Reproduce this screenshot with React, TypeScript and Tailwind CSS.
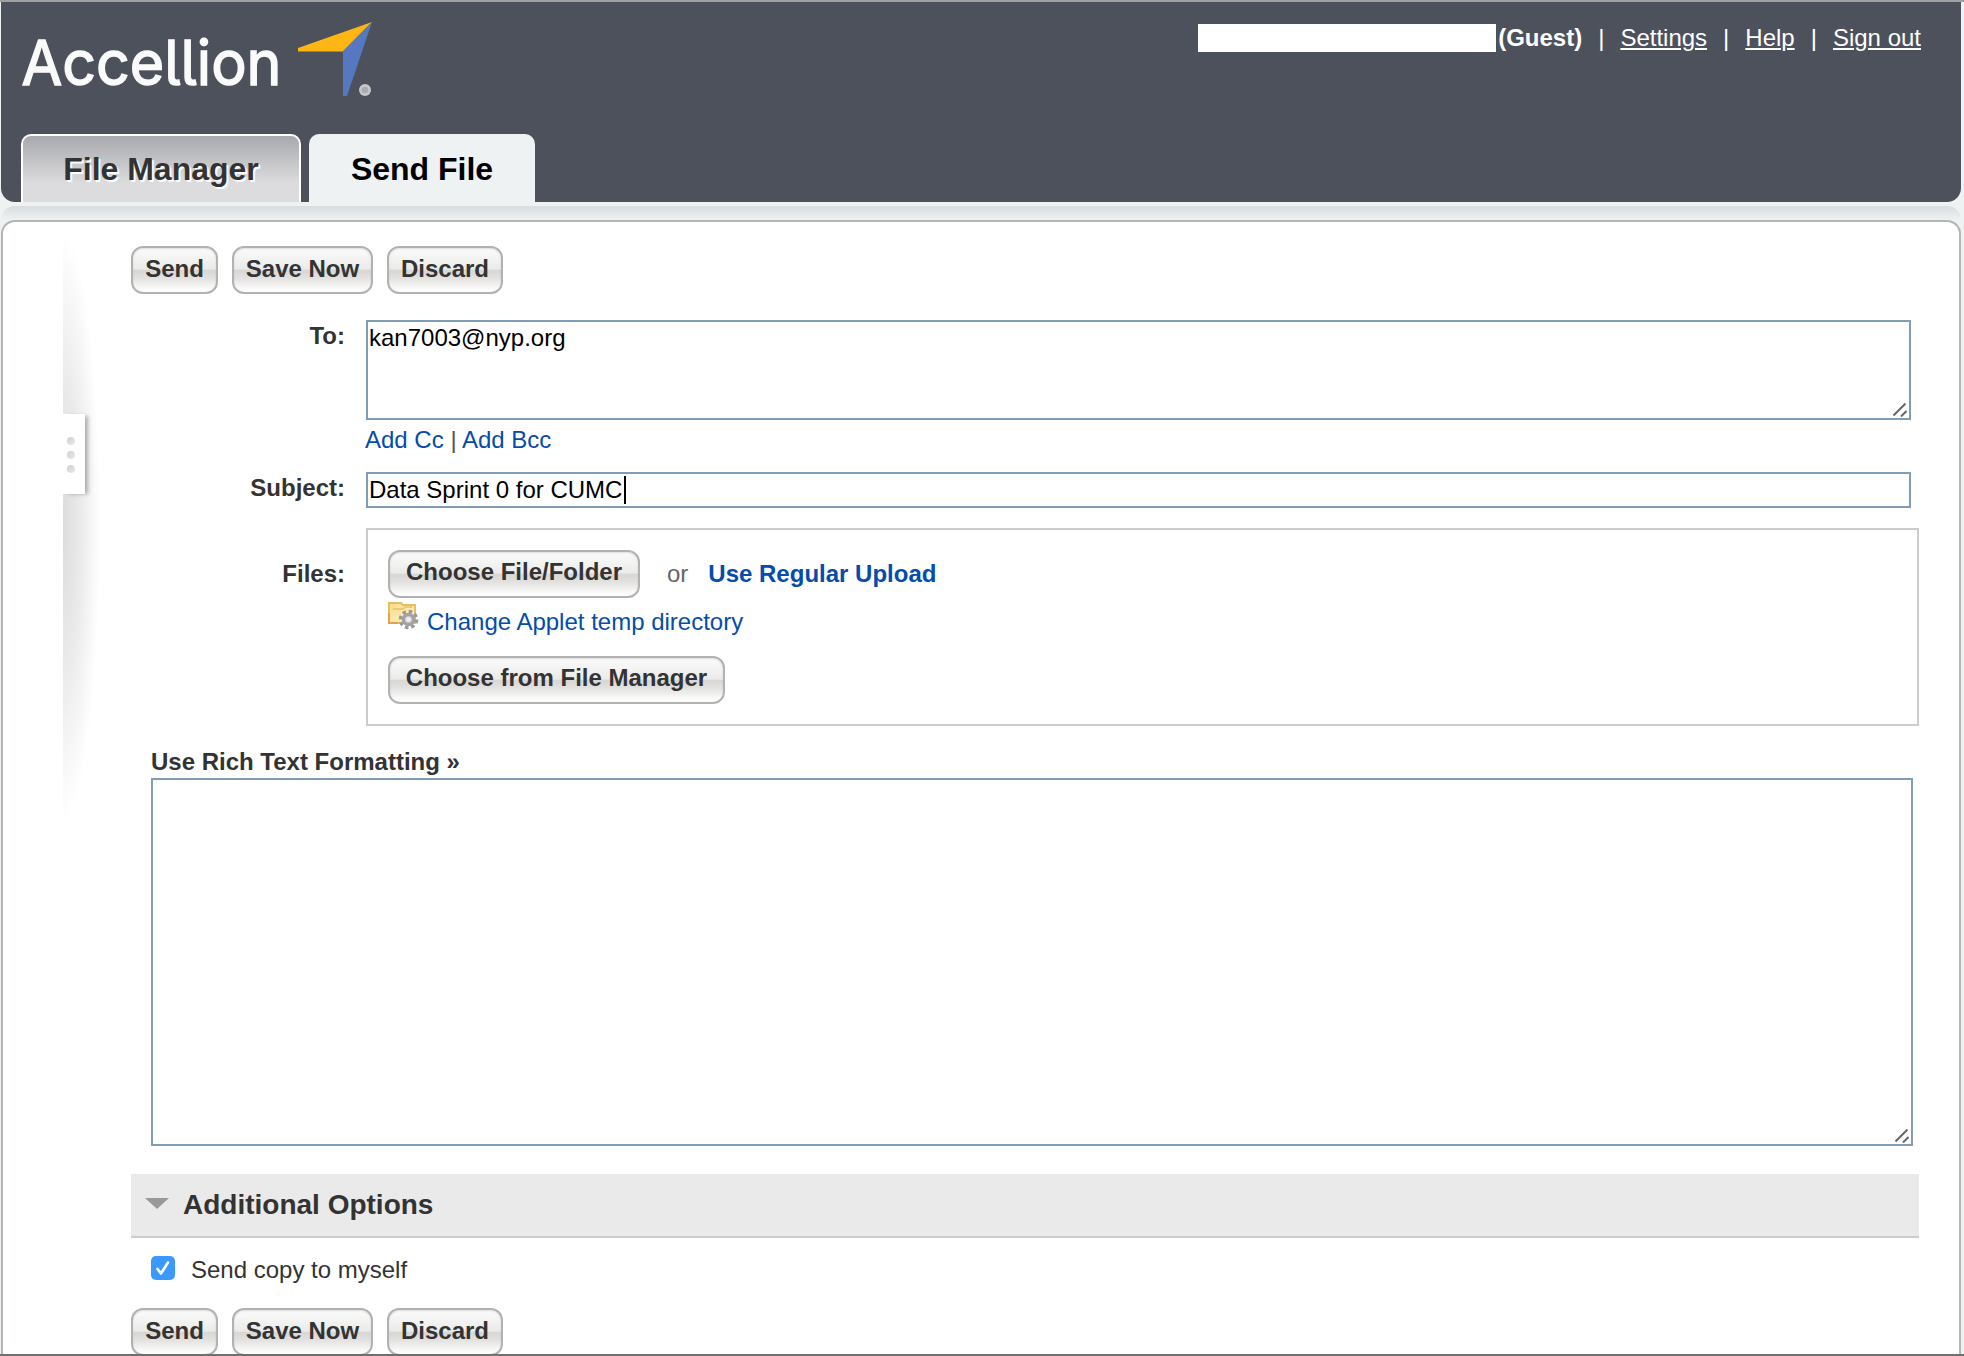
import type { ReactNode } from "react";

function Button({ className, children }: { className: string; children: ReactNode }) {
  return (
    <button
      className={
        "h-12 shrink-0 rounded-[12px] border-2 border-[#b2b2b2] bg-[linear-gradient(to_bottom,#fbfbfb_0%,#f3f3f2_25%,#eaeae9_48%,#d9d7d4_51%,#e2e1df_68%,#f6f6f5_88%,#ffffff_100%)] text-center text-[24px] font-bold whitespace-nowrap text-[#333] shadow-[inset_0_1px_2px_rgba(0,0,0,0.12)] " +
        className
      }
    >
      {children}
    </button>
  );
}

function ActionRow() {
  return (
    <div className="flex gap-[14px]">
      <Button className="w-[87px] pb-[3px] leading-[41px]">Send</Button>
      <Button className="w-[141px] pb-[3px] leading-[41px]">Save Now</Button>
      <Button className="w-[116px] pb-[3px] leading-[41px]">Discard</Button>
    </div>
  );
}

function Grip() {
  return (
    <svg className="absolute right-[2px] bottom-[1px] h-[14px] w-[14px]" viewBox="0 0 14 14" fill="none" stroke="#666" strokeWidth="2">
      <path d="M0.500 12.500 L12.500 0.500 M8 13.500 L13.500 8" />
    </svg>
  );
}

function Logo() {
  return (
    <svg className="h-[80px] w-[360px]" viewBox="0 0 360 80">
      <text
        x="0.500"
        y="63"
        fill="#fafafa"
        stroke="#fafafa"
        strokeWidth="1.500"
        fontFamily="Inter, sans-serif"
        fontSize="62"
        textLength="260"
        lengthAdjust="spacingAndGlyphs"
        className="[font-feature-settings:'cv05'_1]"
      >
        Accellion
      </text>
      <path d="M277 26 L351 0 L322 29.500 L277 29.500 Z" fill="#fdb614" />
      <path d="M351 0 L326 74 L322 74 L322 29 Z" fill="#5578c0" />
      <circle cx="344" cy="68" r="6" fill="#c5c7cb" />
      <circle cx="344" cy="68" r="3.200" fill="#a9abb0" />
    </svg>
  );
}

function FolderGear() {
  return (
    <svg className="h-[30px] w-[32px]" viewBox="0 0 32 30">
      <defs>
        <linearGradient id="folder" x1="0" y1="0" x2="1" y2="1">
          <stop offset="0" stopColor="#f9dc8c" />
          <stop offset="1" stopColor="#fff3c8" />
        </linearGradient>
      </defs>
      <path d="M1 2 H13 L15 4 H27 V22 H1 Z" fill="url(#folder)" stroke="#e9bd62" strokeWidth="2" />
      <path d="M5 8 H15 L17 6 H24" fill="none" stroke="#f2c96c" strokeWidth="2" />
      <path d="M1 12 V22 H10" fill="none" stroke="#e5a14c" strokeWidth="2" />
      <circle cx="20.500" cy="18.500" r="8" fill="none" stroke="#9a9a9a" strokeWidth="3.600" strokeDasharray="3.500 2.780" />
      <circle cx="20.500" cy="18.500" r="5" fill="#ddd" stroke="#a2a2a2" strokeWidth="3.400" />
      <circle cx="20.500" cy="18.500" r="2" fill="#eee" />
    </svg>
  );
}

function SideHandle() {
  return (
    <div className="relative h-[600px] w-[40px] shrink-0">
      <svg className="h-[600px] w-[40px]" viewBox="0 0 40 600">
        <defs>
          <radialGradient id="shade" gradientUnits="userSpaceOnUse" cx="0" cy="0" r="1" gradientTransform="translate(0 297) scale(37 292)">
            <stop offset="0" stopColor="#dcdcdc" />
            <stop offset="0.5" stopColor="#ebebeb" />
            <stop offset="1" stopColor="#ffffff" />
          </radialGradient>
        </defs>
        <rect width="40" height="600" fill="url(#shade)" />
      </svg>
      <div className="absolute top-[184px] left-0 flex h-[80px] w-[22px] flex-col items-center justify-center gap-[6px] bg-white pt-[2px] pr-[7px] shadow-[4px_1px_4px_-1px_rgba(0,0,0,0.28)]">
        <i className="h-2 w-2 rounded-full bg-linear-to-br from-[#cdcdcd] to-[#ececec]" />
        <i className="h-2 w-2 rounded-full bg-linear-to-br from-[#cdcdcd] to-[#ececec]" />
        <i className="h-2 w-2 rounded-full bg-linear-to-br from-[#cdcdcd] to-[#ececec]" />
      </div>
    </div>
  );
}

export default function App() {
  return (
    <div className="flex h-[1356px] w-[1964px] flex-col overflow-hidden border-t-2 border-b-2 border-t-[#a0a0a0] border-b-[#707070] bg-[#eef2f3] pr-[3px] pl-px font-['Liberation_Sans',Arial,sans-serif] text-[24px] leading-7 text-[#333]">
      <header className="flex h-[200px] shrink-0 flex-col justify-between rounded-b-[14px] bg-[#4d515c]">
        <div className="flex justify-between">
          <div className="pt-5 pl-5">
            <Logo />
          </div>
          <div className="mt-[22px] flex h-[28px] items-center pr-10 text-white">
            <span className="h-7 w-[298px] bg-white" />
            <b className="ml-[2px] w-[84px]">(Guest)</b>
            <span className="ml-[16px]">|</span>
            <a className="ml-[16px] underline underline-offset-2">Settings</a>
            <span className="ml-[16px]">|</span>
            <a className="ml-[16px] underline underline-offset-2">Help</a>
            <span className="ml-[16px]">|</span>
            <a className="ml-[16px] underline underline-offset-2">Sign out</a>
          </div>
        </div>
        <nav className="flex h-[68px] gap-2 pl-5 text-center text-[32px] leading-[66px] font-bold">
          <div className="w-[280px] rounded-t-[10px] border-2 border-b-0 border-white bg-[linear-gradient(to_bottom,#a8a9ae,#dcdcde_72%)] [text-shadow:2px_2px_1px_#fff]">File Manager</div>
          <div className="w-[226px] rounded-t-[10px] bg-[#eef2f3] pt-[2px] text-black">Send File</div>
        </nav>
      </header>

      <div className="mt-1 h-[14px] shrink-0 rounded-t-[14px] bg-linear-to-b from-[#d9dddf] to-[#eef2f3]" />

      <main className="flex min-h-0 flex-1 rounded-t-[14px] border-2 border-b-0 border-[#b4b6b6] bg-white pl-[60px]">
        <div className="pt-[8px]">
          <SideHandle />
        </div>
        <div className="ml-[28px] w-[1788px] shrink-0 pt-6">
          <ActionRow />

          <div className="mt-[26px] flex">
            <b className="w-[214px] pt-[2px] text-right">To:</b>
            <div className="relative ml-[21px] h-[100px] w-[1545px] border-2 border-[#7f9db9] pt-[2px] pl-px text-black">
              kan7003@nyp.org
              <Grip />
            </div>
          </div>
          <div className="mt-[6px] ml-[234px] text-[#054cab]">
            Add Cc <span className="text-[#555]">|</span> Add Bcc
          </div>

          <div className="mt-[18px] flex">
            <b className="w-[214px] pt-[2px] text-right">Subject:</b>
            <div className="ml-[21px] flex h-9 w-[1545px] items-center border-2 border-[#7f9db9] pl-px text-black">
              Data Sprint 0 for CUMC
              <span className="ml-[2px] h-7 w-[2px] bg-black" />
            </div>
          </div>

          <div className="mt-5 flex">
            <b className="w-[214px] pt-[32px] text-right">Files:</b>
            <div className="ml-[21px] h-[198px] w-[1553px] border-2 border-[#ccc] pt-5 pl-5">
              <div className="flex items-center">
                <Button className="w-[252px] pb-[5px] leading-[39px]">Choose File/Folder</Button>
                <span className="ml-[27px] text-[#666]">or</span>
                <b className="ml-5 text-[#054cab]">Use Regular Upload</b>
              </div>
              <div className="mt-[3px] flex h-[33px] text-[#054cab]">
                <FolderGear />
                <span className="ml-[7px] pt-[7px]">Change Applet temp directory</span>
              </div>
              <Button className="mt-[22px] w-[337px] pb-[5px] leading-[39px]">Choose from File Manager</Button>
            </div>
          </div>

          <div className="mt-[22px] ml-5 font-bold">Use Rich Text Formatting »</div>
          <div className="relative mt-[2px] ml-5 h-[368px] w-[1762px] border-2 border-[#7f9db9]">
            <Grip />
          </div>

          <div className="mt-7 flex h-[64px] items-center border-b-2 border-[#ccc] bg-[#eaeaea] pl-[14px] text-[28px] font-bold">
            <svg className="mt-[-3px] h-3 w-6" viewBox="0 0 24 12">
              <path d="M0 0 H24 L12 11 Z" fill="#999" />
            </svg>
            <span className="ml-[14px] pb-[1px]">Additional Options</span>
          </div>

          <div className="mt-[18px] ml-5 flex h-7">
            <div className="grid size-6 place-items-center rounded-[5px] bg-[#3b99fc]">
              <svg className="size-5" viewBox="0 0 20 20" fill="none" stroke="#fff" strokeWidth="2.600" strokeLinecap="round" strokeLinejoin="round">
                <path d="M4.500 11 L8 15.500 L15 4.500" />
              </svg>
            </div>
            <span className="ml-4">Send copy to myself</span>
          </div>

          <div className="mt-6">
            <ActionRow />
          </div>
        </div>
      </main>
    </div>
  );
}
